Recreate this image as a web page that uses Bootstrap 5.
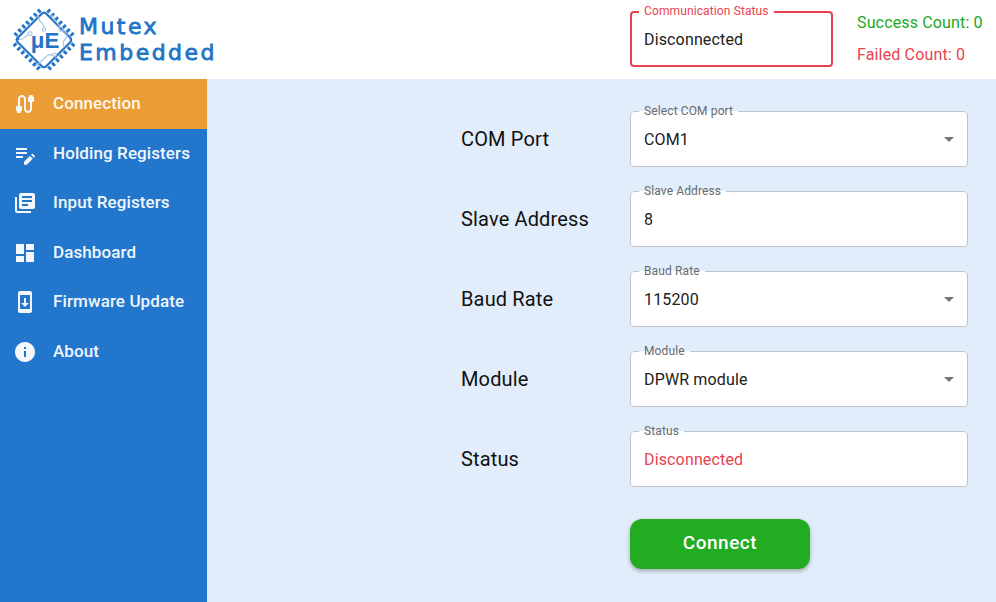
<!doctype html>
<html lang="en">
<head>
<meta charset="utf-8">
<title>Mutex Embedded</title>
<link href="https://cdn.jsdelivr.net/npm/bootstrap@5.3.0/dist/css/bootstrap.min.css" rel="stylesheet">
<style>
html,body{height:100%;margin:0}
body{font-family:Roboto,"Liberation Sans",sans-serif;font-size:16px;letter-spacing:.15px;color:#212121;overflow:hidden;background:#e1edfa}
.shell{height:100vh}
.topbar{height:79px;background:#fff;flex:none;padding:0 13px 0 9px}
.logo-mark{width:70px;height:70px;flex:none;margin-top:1px}
.logo-words{color:#2274c6;font-family:"DejaVu Sans",sans-serif;font-size:22px;line-height:25.7px;margin-left:0;letter-spacing:2.45px;font-weight:400;-webkit-text-stroke:.8px #2274c6}
.notch{position:relative;margin:0;padding:0;min-width:0;background:#fff;border:1px solid #c0c4c9;border-radius:4px;height:56px}
.notch legend{float:none;width:auto;margin:0 0 0 8px;padding:0 5px;font-size:12px;letter-spacing:.12px;line-height:1;height:12px;color:#666b70;position:absolute;top:-7px;left:0;background:linear-gradient(transparent 6px,#fff 6px);}
.notch .form-control,.notch .form-select{background-color:transparent;border:0;box-shadow:none;height:54px;padding:1px 13px 0;font-size:16px;letter-spacing:.15px;color:#212121;border-radius:4px}
.notch .form-select{background-image:url("data:image/svg+xml,%3Csvg xmlns='http://www.w3.org/2000/svg' viewBox='0 0 10 5'%3E%3Cpath fill='%23757575' d='M0 0h10L5 5z'/%3E%3C/svg%3E");background-size:10px 5px;background-position:right 13px center}
.notch .alert-value{color:#e8424f}
.comm-box{width:203px;border:2px solid #e8424f}
.comm-box legend{color:#e8424f;margin-left:7px;top:-8px;letter-spacing:.12px}
.comm-box .comm-value{height:52px;padding:1px 12px 0;line-height:52px}
.status-group{margin-bottom:2px}
.counts{margin-left:24px;width:126px;line-height:19px;letter-spacing:.15px;white-space:nowrap}
.ok-count{color:#22a822;margin-bottom:13px}
.bad-count{color:#e8424f}
.sidenav{width:207px;background:#2276cc;flex:none}
.sidenav a{height:49.5px;color:#f0f6fd;font-weight:500;font-size:17px;letter-spacing:.1px;text-decoration:none;padding:.6px 0 0 13px}
.sidenav a.current{background:#ec9c34;color:#fdf6ec}
.sidenav svg{width:24px;height:24px;fill:#f4f8fd;margin-right:16px;flex:none}
.workarea{background:#e1edfa;padding:32px 28px 0 0}
.form-stack{width:507px;gap:24px}
.field-label{width:169px;font-size:20px;color:#111;flex:none}
.field-box{width:338px}
.go-btn{margin:8px 0 0 169px;width:180px;height:50px;padding:0 0 1px;background:#22ac21;border:0;border-radius:12px;color:#fff;font-size:19px;font-weight:500;letter-spacing:.5px;box-shadow:0 2px 4px rgba(0,0,0,.3)}
.go-btn:hover{background:#22ac21;color:#fff}
</style>
</head>
<body>
<div class="shell d-flex flex-column">
  <header class="topbar d-flex align-items-center">
    <svg class="logo-mark" viewBox="0 0 66 66" aria-label="Mutex Embedded logo">
      <g transform="translate(33 33) rotate(45)">
        <rect x="-19" y="-19" width="38" height="38" rx="3" fill="#fff" stroke="#2274c6" stroke-width="2"/>
        <g stroke="#2274c6" stroke-width="4" stroke-dasharray="2.6 2.6" fill="none">
          <path d="M-17.5-22.5H17.5"/><path d="M-17.5 22.5H17.5"/><path d="M-22.5-17.5V17.5"/><path d="M22.5-17.5V17.5"/>
        </g>
      </g>
      <g fill="none" stroke="#9cc1e6" stroke-width="1">
        <path d="M27 9l2 6 3 3 1 3"/><circle cx="33" cy="23" r="1.6"/>
        <path d="M5 33l8-1 5-4"/><circle cx="20" cy="27" r="1.8"/>
        <path d="M40 9l8 12"/><circle cx="49" cy="23" r="1.8"/>
        <path d="M51 24l4 5-4 6 1 5"/>
        <path d="M25 58l12-11h5"/><circle cx="43" cy="47" r="1.8"/>
      </g>
      <circle cx="8" cy="32" r="1.6" fill="#2274c6"/>
      <text x="34" y="41" text-anchor="middle" font-family="'Liberation Sans',sans-serif" font-size="21" font-weight="700" fill="#2274c6">μE</text>
    </svg>
    <div class="logo-words">Mutex<br>Embedded</div>
    <div class="status-group ms-auto d-flex align-items-center">
      <fieldset class="notch comm-box">
        <legend>Communication Status</legend>
        <div class="comm-value">Disconnected</div>
      </fieldset>
      <div class="counts">
        <div class="ok-count">Success Count: 0</div>
        <div class="bad-count">Failed Count: 0</div>
      </div>
    </div>
  </header>
  <div class="d-flex flex-grow-1">
    <nav class="sidenav d-flex flex-column">
      <a href="#" class="current d-flex align-items-center"><svg viewBox="0 0 24 24"><path d="M20 5V4c0-.55-.45-1-1-1h-2c-.55 0-1 .45-1 1v1h-1v4c0 .55.45 1 1 1h1v7c0 1.1-.9 2-2 2s-2-.9-2-2V7c0-2.21-1.79-4-4-4S5 4.79 5 7v7H4c-.55 0-1 .45-1 1v4h1v1c0 .55.45 1 1 1h2c.55 0 1-.45 1-1v-1h1v-4c0-.55-.45-1-1-1H7V7c0-1.1.9-2 2-2s2 .9 2 2v10c0 2.21 1.79 4 4 4s4-1.79 4-4v-7h1c.55 0 1-.45 1-1V5h-1z"/></svg>Connection</a>
      <a href="#" class="d-flex align-items-center"><svg viewBox="0 0 24 24"><path d="M3 10h11v2H3v-2zm0-2h11V6H3v2zm0 8h7v-2H3v2zm15.01-3.13.71-.71c.39-.39 1.02-.39 1.41 0l1.42 1.42c.39.39.39 1.02 0 1.41l-.71.71-2.83-2.83zm-1.06 1.06L11 19.87V22.7h2.83l5.95-5.95-2.83-2.82z"/></svg>Holding Registers</a>
      <a href="#" class="d-flex align-items-center"><svg viewBox="0 0 24 24"><path d="M4 6H2v14c0 1.1.9 2 2 2h14v-2H4V6zm16-4H8c-1.1 0-2 .9-2 2v12c0 1.1.9 2 2 2h12c1.1 0 2-.9 2-2V4c0-1.1-.9-2-2-2zm-1 9H9V9h10v2zm-4 4H9v-2h6v2zm4-8H9V5h10v2z"/></svg>Input Registers</a>
      <a href="#" class="d-flex align-items-center"><svg viewBox="0 0 24 24"><path d="M3 13h8V3H3v10zm0 8h8v-6H3v6zm10 0h8V11h-8v10zm0-18v6h8V3h-8z"/></svg>Dashboard</a>
      <a href="#" class="d-flex align-items-center"><svg viewBox="0 0 24 24"><path d="M17 1.01 7 1c-1.1 0-2 .9-2 2v18c0 1.1.9 2 2 2h10c1.1 0 2-.9 2-2V3c0-1.1-.9-1.99-2-1.99zM17 19H7V5h10v14zm-1-6h-3V8h-2v5H8l4 4 4-4z"/></svg>Firmware Update</a>
      <a href="#" class="d-flex align-items-center"><svg viewBox="0 0 24 24"><path d="M12 2C6.48 2 2 6.48 2 12s4.48 10 10 10 10-4.48 10-10S17.52 2 12 2zm1 15h-2v-6h2v6zm0-8h-2V7h2v2z"/></svg>About</a>
    </nav>
    <main class="workarea flex-grow-1 d-flex justify-content-end">
      <form class="form-stack d-flex flex-column">
        <div class="d-flex align-items-center">
          <label class="field-label" for="port">COM Port</label>
          <fieldset class="notch field-box"><legend>Select COM port</legend>
            <select class="form-select" id="port"><option>COM1</option></select></fieldset>
        </div>
        <div class="d-flex align-items-center">
          <label class="field-label" for="addr">Slave Address</label>
          <fieldset class="notch field-box"><legend>Slave Address</legend>
            <input class="form-control" id="addr" value="8"></fieldset>
        </div>
        <div class="d-flex align-items-center">
          <label class="field-label" for="baud">Baud Rate</label>
          <fieldset class="notch field-box"><legend>Baud Rate</legend>
            <select class="form-select" id="baud"><option>115200</option></select></fieldset>
        </div>
        <div class="d-flex align-items-center">
          <label class="field-label" for="mod">Module</label>
          <fieldset class="notch field-box"><legend>Module</legend>
            <select class="form-select" id="mod"><option>DPWR module</option></select></fieldset>
        </div>
        <div class="d-flex align-items-center">
          <label class="field-label" for="stat">Status</label>
          <fieldset class="notch field-box"><legend>Status</legend>
            <input class="form-control alert-value" id="stat" value="Disconnected" readonly></fieldset>
        </div>
        <button type="button" class="btn go-btn">Connect</button>
      </form>
    </main>
  </div>
</div>
<script src="https://cdn.jsdelivr.net/npm/bootstrap@5.3.0/dist/js/bootstrap.bundle.min.js"></script>
</body>
</html>
